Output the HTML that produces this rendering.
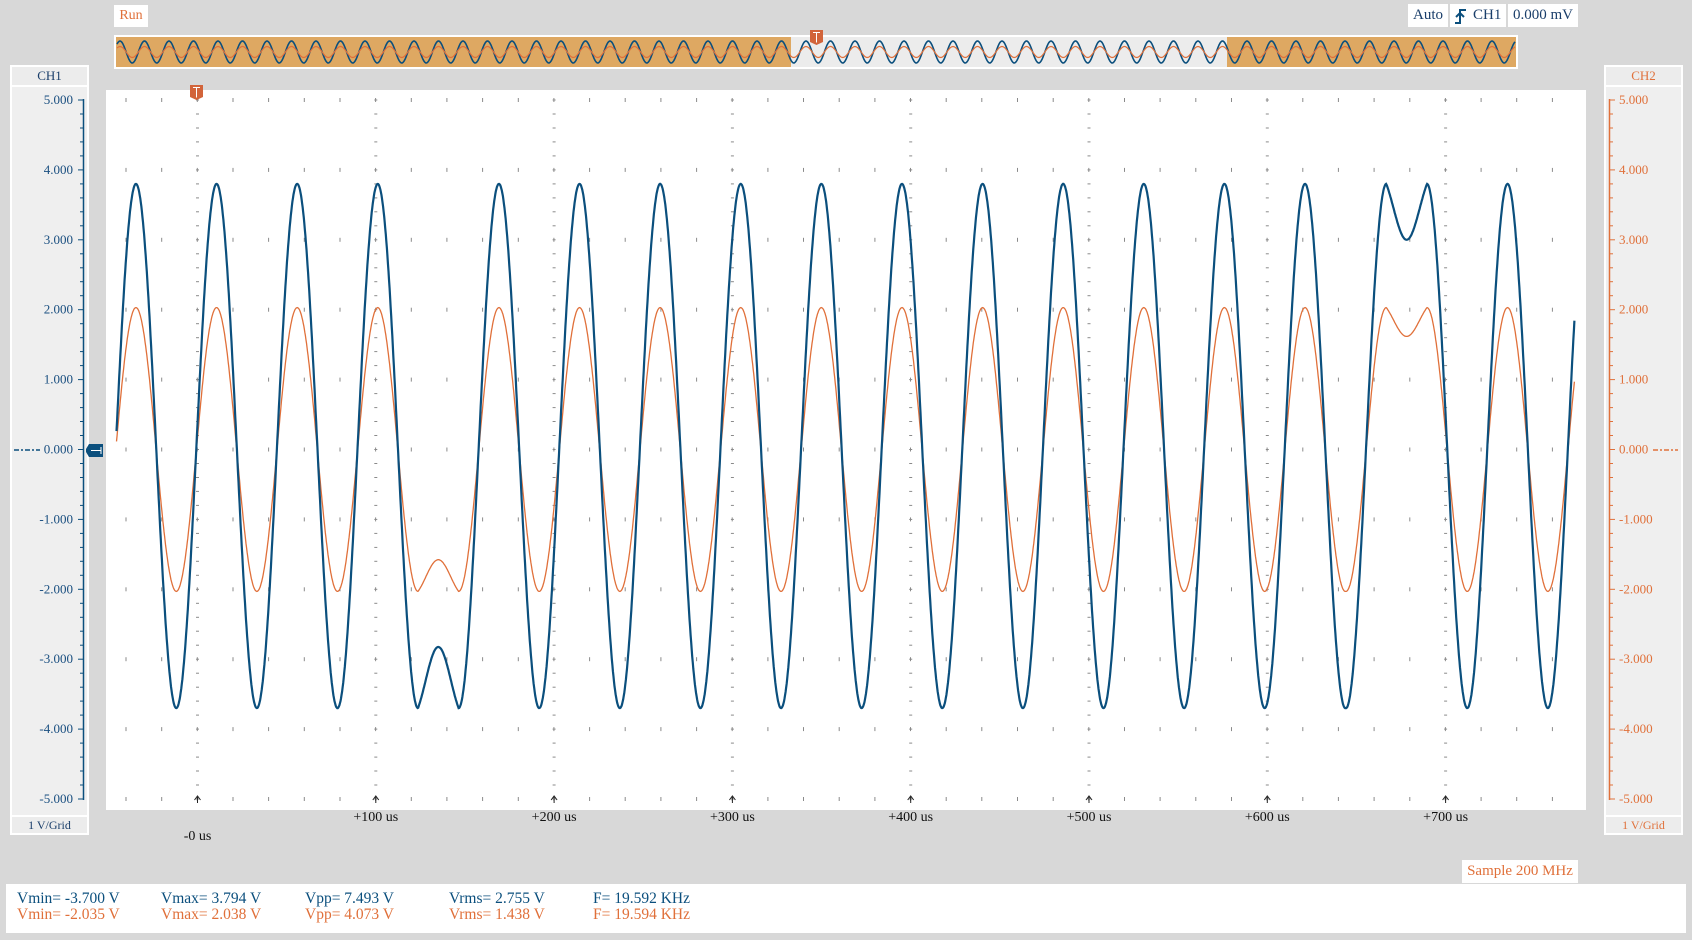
<!DOCTYPE html>
<html><head><meta charset="utf-8"><style>
html,body{margin:0;padding:0;width:1692px;height:940px;overflow:hidden;background:#d8d8d8;font-family:"Liberation Serif",serif;}
.abs{position:absolute;}
.box{position:absolute;background:#fff;font-size:15px;line-height:23px;}
.st{position:absolute;font-size:15.5px;line-height:16px;white-space:pre;}
</style></head><body>
<div class="box" style="left:114px;top:5px;width:34px;height:22px;color:#e0703a;text-align:center;font-size:14px;line-height:22px;">Run</div>
<div class="box" style="left:1408px;top:4px;width:40px;height:23px;color:#1a3e6a;text-align:center;font-size:15px;">Auto</div>
<div class="box" style="left:1450px;top:4px;width:56px;height:23px;color:#1a3e6a;font-size:15px;">
<svg class="abs" style="left:3px;top:3px" width="16" height="18" viewBox="0 0 16 18"><path d="M2 16 H7 V3 H13 M3 10 L7 6 L11 10" fill="none" stroke="#0b4f7d" stroke-width="2"/></svg>
<span class="abs" style="left:23px;top:0">CH1</span></div>
<div class="box" style="left:1508px;top:4px;width:70px;height:23px;color:#1a3e6a;text-align:center;font-size:15px;">0.000 mV</div>
<div class="box" style="left:1462px;top:860px;width:116px;height:23px;color:#e0703a;text-align:center;font-size:15px;">Sample 200 MHz</div>

<div class="abs" style="left:10px;top:65px;width:79px;height:770px;background:#fff;"></div>
<div class="abs" style="left:12px;top:67px;width:75px;height:18px;background:#ececec;color:#1a3e6a;font-size:13px;text-align:center;line-height:18px;">CH1</div>
<div class="abs" style="left:12px;top:87px;width:75px;height:728px;background:#efefef;"></div>
<div class="abs" style="left:12px;top:817px;width:75px;height:16px;background:#ececec;color:#1a3e6a;font-size:12px;text-align:center;line-height:16px;">1 V/Grid</div>
<div class="abs" style="left:1604px;top:65px;width:79px;height:770px;background:#fff;"></div>
<div class="abs" style="left:1606px;top:67px;width:75px;height:18px;background:#ececec;color:#e0703a;font-size:13px;text-align:center;line-height:18px;">CH2</div>
<div class="abs" style="left:1606px;top:87px;width:75px;height:728px;background:#efefef;"></div>
<div class="abs" style="left:1606px;top:817px;width:75px;height:16px;background:#ececec;color:#e0703a;font-size:12px;text-align:center;line-height:16px;">1 V/Grid</div>

<div class="abs" style="left:106px;top:90px;width:1480px;height:720px;background:#fff;"></div>
<div class="abs" style="left:114px;top:35px;width:1404px;height:34px;background:#fff;"></div>
<div class="abs" style="left:116px;top:37px;width:1400px;height:30px;background:#dea862;"></div>
<div class="abs" style="left:791px;top:37px;width:436px;height:30px;background:#ececec;"></div>

<div class="abs" style="left:6px;top:884px;width:1680px;height:49px;background:#fff;"></div>
<div class="st" style="left:17px;top:891px;color:#0b4f7d;">Vmin= -3.700 V</div>
<div class="st" style="left:161px;top:891px;color:#0b4f7d;">Vmax= 3.794 V</div>
<div class="st" style="left:305px;top:891px;color:#0b4f7d;">Vpp= 7.493 V</div>
<div class="st" style="left:449px;top:891px;color:#0b4f7d;">Vrms= 2.755 V</div>
<div class="st" style="left:593px;top:891px;color:#0b4f7d;">F= 19.592 KHz</div>
<div class="st" style="left:17px;top:907px;color:#e0703a;">Vmin= -2.035 V</div>
<div class="st" style="left:161px;top:907px;color:#e0703a;">Vmax= 2.038 V</div>
<div class="st" style="left:305px;top:907px;color:#e0703a;">Vpp= 4.073 V</div>
<div class="st" style="left:449px;top:907px;color:#e0703a;">Vrms= 1.438 V</div>
<div class="st" style="left:593px;top:907px;color:#e0703a;">F= 19.594 KHz</div>

<svg id="s" class="abs" style="left:0;top:0" width="1692" height="940"></svg>
<script>
var s=document.getElementById('s'),h='';
var Y=function(v){return 449.5-v*69.9;};
for(var k=0;k<=10;k++){var y=Y(5-k);
 for(var x=126;x<1586;x+=35.66){h+='<rect x="'+(x-0.5).toFixed(1)+'" y="'+(y-2)+'" width="1" height="4" fill="#8a8a8a"/>';}}
for(var n=0;n<8;n++){var x=197.5+178.3*n;
 for(var y=100;y<800;y+=13.98){h+='<rect x="'+(x-1.5).toFixed(1)+'" y="'+(y-0.5).toFixed(1)+'" width="3" height="1" fill="#8a8a8a"/>';}
 h+='<path d="M'+x+' 803 V797 M'+(x-3)+' 800 L'+x+' 796 L'+(x+3)+' 800" stroke="#222" stroke-width="1" fill="none"/>';
 if(n==0) h+='<text x="'+x+'" y="840" text-anchor="middle" font-size="14" font-family="Liberation Serif" fill="#111">-0 us</text>';
 else h+='<text x="'+x+'" y="821" text-anchor="middle" font-size="14" font-family="Liberation Serif" fill="#111">+'+(n*100)+' us</text>';}
var cB='#0b4f7d',cO='#e0703a';
h+='<line x1="83.5" y1="99" x2="83.5" y2="800" stroke="'+cB+'" stroke-width="1.5"/>';
h+='<line x1="1609.5" y1="99" x2="1609.5" y2="800" stroke="'+cO+'" stroke-width="1.5"/>';
for(var i=0;i<=50;i++){var y=(100+i*13.98).toFixed(1),mj=i%5==0;
 h+='<line x1="'+(mj?78:80)+'" y1="'+y+'" x2="84" y2="'+y+'" stroke="'+cB+'"/>';
 h+='<line x1="1609" y1="'+y+'" x2="'+(mj?1615:1613)+'" y2="'+y+'" stroke="'+cO+'"/>';
 if(mj){var v=5-i/5,t=(v<0?'-':'')+Math.abs(v).toFixed(3);
  h+='<text x="73" y="'+(+y+4)+'" text-anchor="end" font-size="13" font-family="Liberation Serif" fill="#1a4f80">'+t+'</text>';
  h+='<text x="1619" y="'+(+y+4)+'" font-size="13" font-family="Liberation Serif" fill="'+cO+'">'+t+'</text>';}}
h+='<line x1="14" y1="450" x2="40" y2="450" stroke="'+cB+'" stroke-width="1.5" stroke-dasharray="5,2,2,2"/>';
h+='<line x1="1653" y1="450" x2="1678" y2="450" stroke="'+cO+'" stroke-width="1.5" stroke-dasharray="5,2,2,2"/>';
h+='<path d="M89 444 H103 V457 H89 L86 452 V449 Z" fill="'+cB+'"/><path d="M91 450.5 H101 M101 447 V454" stroke="#fff" stroke-width="1"/>';
function trig(x,y){return '<path d="M'+x+' '+y+' h13 v12 l-6.5 3 l-6.5 -3 z" fill="#d2643a"/><path d="M'+(x+3)+' '+(y+2.5)+' h7 M'+(x+6.5)+' '+(y+2.5)+' v10" stroke="#fff" stroke-width="1"/>';}
h+=trig(190,85)+trig(810,30);
var P=74.7;
function w(d,A,off,b){var C=Math.cos,pi=Math.PI;
 if(d<350)return off+A*C(2*pi*(d-126)/P);
 if(d<387.35)return off+A*C(2*pi*(d-350)/P);
 if(d<425){var t=(d-387.35)/37.65;return off-A*0.95+b*Math.sin(pi*t)-A*0.05*Math.cos(2*pi*t);}
 if(d<1247.35)return off+A*C(2*pi*(d-462.35)/P);
 if(d<1284.7)return off-A*C(2*pi*(d-1247.35)/P);
 if(d<1322.35){var t=(d-1284.7)/37.65;return off+A*0.96-b*Math.sin(pi*t)+A*0.04*Math.cos(2*pi*t);}
 return off+A*C(2*pi*(d-1322.35)/P);}
function path(A,off,b,col,sw){var p='';for(var d=108;d<=1459;d+=0.5){var v=w(d,A,off,b);
 p+=(p?'L':'M')+(d*1.0791).toFixed(1)+' '+Y(v).toFixed(1);}
 return '<path d="'+p+'" fill="none" stroke="'+col+'" stroke-width="'+sw+'"/>';}
h+=path(2.03,0,0.25,cO,1.3)+path(3.75,0.05,0.5,cB,2.2);
function ov(A,col,sw){var p='';for(var x=117;x<=1515;x+=1){var v=A*Math.cos(2*Math.PI*(x-120)/24.5);p+=(p?'L':'M')+x+' '+(52-v).toFixed(1);}
 return '<path d="'+p+'" fill="none" stroke="'+col+'" stroke-width="'+sw+'"/>';}
h+=ov(11,cB,1.6)+ov(5.5,cO,1.2);
s.innerHTML=h;
</script>
</body></html>
